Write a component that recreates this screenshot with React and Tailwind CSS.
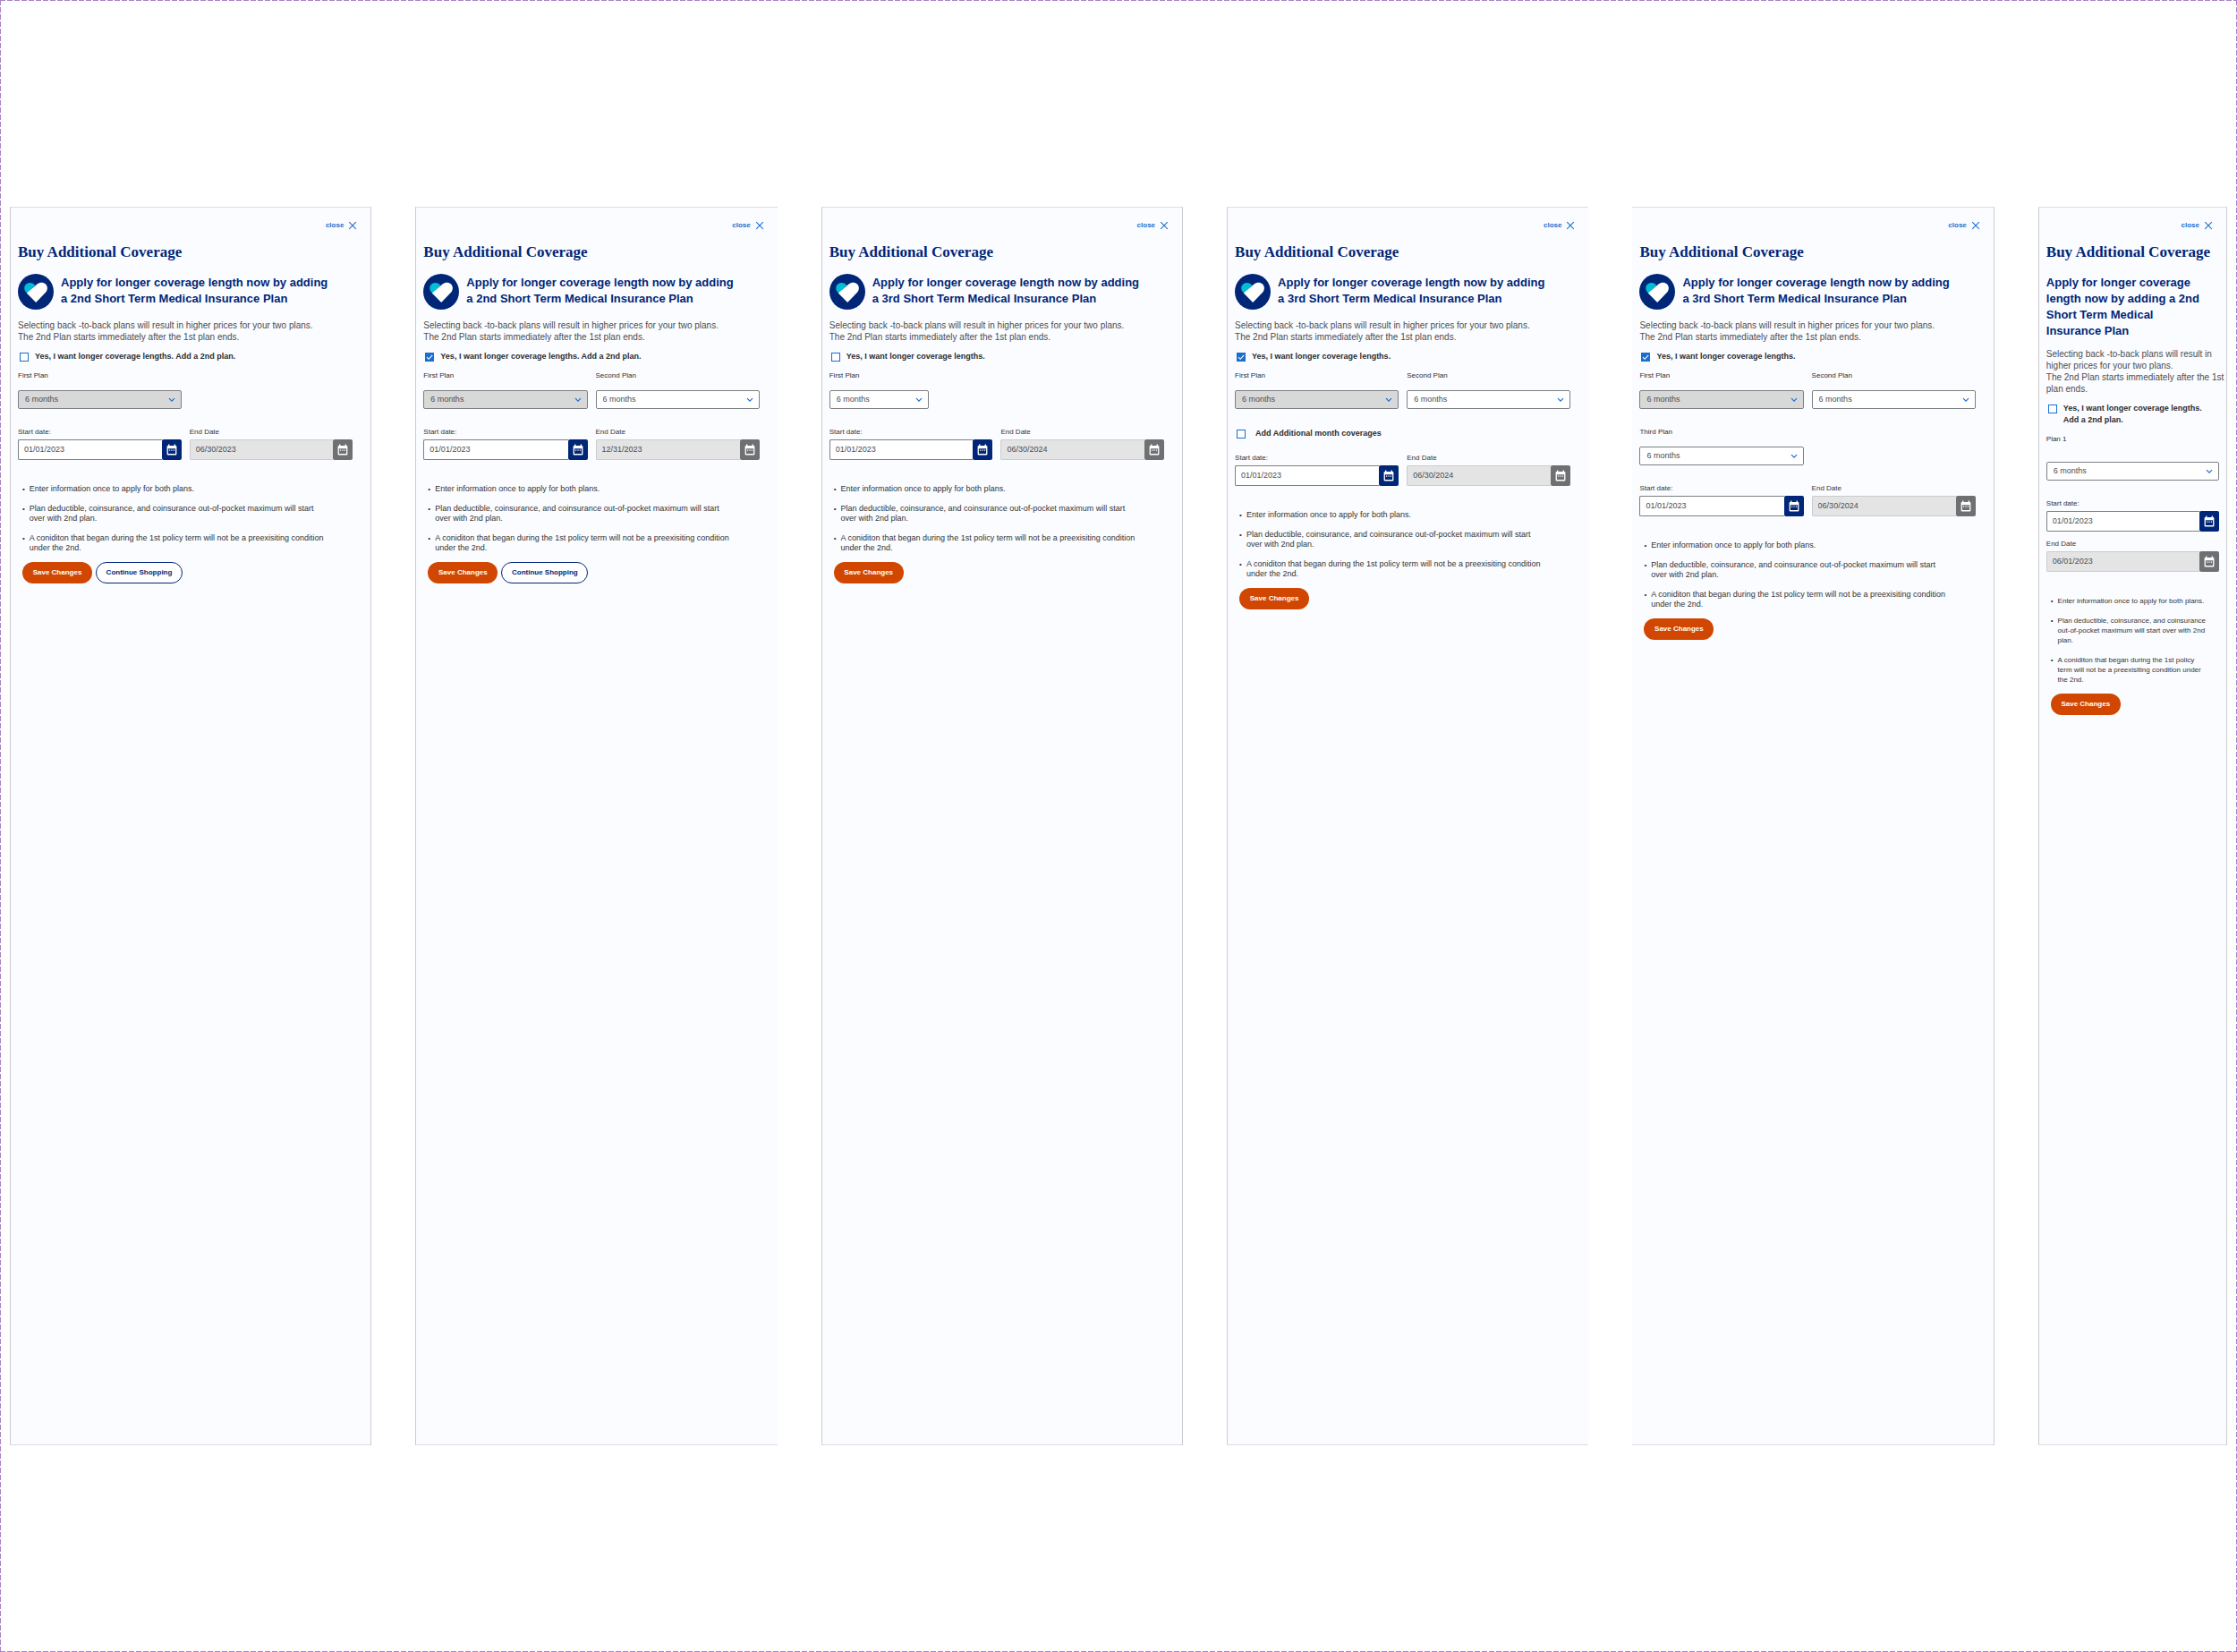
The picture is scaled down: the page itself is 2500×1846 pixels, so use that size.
import { useId } from "react";

function HeartLogo() {
  return (
    <svg viewBox="0 0 40 40" className="size-10 shrink-0" aria-hidden="true">
      <circle cx="20" cy="20" r="20" fill="#002677" />
      <path d="M9.2 20.6C6.4 17.6 6.6 13.4 9.6 11.2C12.8 9 17 9.8 19.4 12.8L10.4 21.8Z" fill="#00bed5" />
      <path
        d="M9.8 21.4L21.6 11.6C24.4 9.4 28.4 9.2 31 11.6C33.6 14.2 33.4 18.2 31 20.8L20.2 32Z"
        fill="#fff"
      />
    </svg>
  );
}

function CalendarIcon() {
  return (
    <svg viewBox="0 0 12 14" className="h-3.5 w-3" aria-hidden="true">
      <path
        fillRule="evenodd"
        fill="#fff"
        d="M2 2V0.6H3.4V2H8.6V0.6H10V2H10.4Q11.4 2 11.4 3V11.4Q11.4 12.4 10.4 12.4H1.6Q0.6 12.4 0.6 11.4V3Q0.6 2 1.6 2ZM1.9 5.2V11.1H10.1V5.2Z"
      />
      <path fill="#fff" d="M3 6.6H4.2V7.8H3ZM5.4 6.6H6.6V7.8H5.4ZM7.8 6.6H9V7.8H7.8Z" />
    </svg>
  );
}

function CheckOption({ label, defaultChecked = false, gap = "gap-[7px]" }) {
  const id = useId();
  return (
    <div className={"flex items-start pl-0.5 " + gap}>
      <span className="relative mt-[2px] block size-[10px] shrink-0">
        <input
          id={id}
          type="checkbox"
          defaultChecked={defaultChecked}
          className="peer block size-[10px] appearance-none border border-[#196ecf] bg-white checked:bg-[#196ecf]"
        />
        <svg
          viewBox="0 0 10 10"
          className="pointer-events-none absolute inset-0 hidden peer-checked:block"
          aria-hidden="true"
        >
          <path d="M2 5.2L4.1 7.3L8.2 2.8" fill="none" stroke="#fff" strokeWidth="1.1" />
        </svg>
      </span>
      <label htmlFor={id} className="text-[9px] leading-[13px] font-bold text-[#2b2c30]">
        {label}
      </label>
    </div>
  );
}

function PlanSelect({ label, disabled = false, narrow = false, tall = false }) {
  const id = useId();
  return (
    <div>
      <label htmlFor={id} className={(tall ? "mb-[19px]" : "mb-[10px]") + " block text-[8px] leading-[13px] text-[#2b2c30]"}>
        {label}
      </label>
      <div className={(narrow ? "w-[111px]" : "w-full") + " relative"}>
        <select
          id={id}
          disabled={disabled}
          className="block h-[21px] w-full appearance-none rounded-[2px] border border-[#7d7f81] bg-white pl-[7px] text-[9px] text-[#4b4d4f] opacity-100 disabled:bg-[#d8d8d8]"
        >
          <option>6 months</option>
        </select>
        <svg viewBox="0 0 8 6" className="pointer-events-none absolute top-2 right-[7px] h-1.5 w-2" aria-hidden="true">
          <path d="M1 1.2L4 4.2L7 1.2" fill="none" stroke="#196ecf" strokeWidth="1.2" />
        </svg>
      </div>
    </div>
  );
}

function DateField({ label, value, disabled = false }) {
  const id = useId();
  return (
    <div>
      <label htmlFor={id} className="block pb-[3px] text-[8px] leading-[11px] text-[#323334]">
        {label}
      </label>
      <div className="flex h-[23px]">
        <input
          id={id}
          type="text"
          defaultValue={value}
          disabled={disabled}
          className="min-w-0 flex-1 rounded-l-[2px] border border-r-0 border-[#7d7f81] bg-white pl-1.5 text-[9px] text-[#4b4d4f] disabled:border-[#cbccce] disabled:bg-[#e4e4e4]"
        />
        <button
          type="button"
          disabled={disabled}
          aria-label={"Choose " + label}
          className="flex w-[22px] items-center justify-center rounded-[2px] bg-[#002677] disabled:bg-[#6e7072]"
        >
          <CalendarIcon />
        </button>
      </div>
    </div>
  );
}

const NOTES = [
  "Enter information once to apply for both plans.",
  "Plan deductible, coinsurance, and coinsurance out-of-pocket maximum will start over with 2nd plan.",
  "A coniditon that began during the 1st policy term will not be a preexisiting condition under the 2nd.",
];

function Panel({ border, ordinal, compact = false, option, checked, plans, extra, endDate, shopping }) {
  return (
    <section className={"flex min-w-0 flex-col border-x-[#cbccce] border-y border-y-[#dcdde0] bg-[#fbfcff] pb-10 " + border}>
      <div className="flex justify-end pt-3.5 pr-[15px]">
        <button type="button" className="flex h-3 items-center gap-[5px] text-[8px] font-bold text-[#196ecf]">
          close
          <svg viewBox="0 0 10 10" className="size-2.5" aria-hidden="true">
            <path d="M1.2 1.2L8.8 8.8M8.8 1.2L1.2 8.8" stroke="#196ecf" strokeWidth="1.1" />
          </svg>
        </button>
      </div>
      <h2 className="mt-3 pl-2 font-['Liberation_Serif',serif] text-[17px] leading-6 font-bold whitespace-nowrap text-[#002677]">
        Buy Additional Coverage
      </h2>
      <div className={compact ? "mt-3 px-2" : "mt-3 flex gap-2 pl-2"}>
        {!compact && <HeartLogo />}
        <h3
          className={
            (compact ? "max-w-[180px]" : "max-w-[306px]") +
            " pt-px text-[13px] leading-[18px] font-bold text-[#002677]"
          }
        >
          {`Apply for longer coverage length now by adding a ${ordinal} Short Term Medical Insurance Plan`}
        </h3>
      </div>
      <p className={(compact ? "mt-2.5" : "mt-[11px]") + " pl-2 text-[10px] leading-[13px] text-[#4b4d4f]"}>
        Selecting back -to-back plans will result in higher prices for your two plans.
        <br />
        The 2nd Plan starts immediately after the 1st plan ends.
      </p>
      <form className={compact ? "px-2" : "pr-5 pl-2"} onSubmit={(e) => e.preventDefault()}>
        <div className="mt-[9px]">
          <CheckOption label={option} defaultChecked={checked} />
        </div>
        <div className={(compact ? "grid-cols-1" : "grid-cols-2") + " mt-2 grid gap-x-[9px] gap-y-[19px]"}>
          {plans.map((p) => (
            <PlanSelect key={p.label} {...p} />
          ))}
        </div>
        {extra && (
          <div className="mt-[21px]">
            <CheckOption label={extra} gap="gap-[11px]" />
          </div>
        )}
        <div
          className={
            (compact ? "grid-cols-1 gap-y-2 " : "grid-cols-2 gap-x-[9px] ") + (extra ? "mt-[15px]" : "mt-5") + " grid"
          }
        >
          <DateField label="Start date:" value="01/01/2023" />
          <DateField label="End Date" value={endDate} disabled />
        </div>
        <ul
          className={
            (compact ? "max-w-[182px] text-[8px]" : "max-w-[346px] text-[9px]") +
            " mt-[27px] space-y-[11px] pl-[5px] leading-[11px] text-[#323334]"
          }
        >
          {NOTES.map((note) => (
            <li key={note} className="flex gap-[5px]">
              <span className="text-[8px]" aria-hidden="true">
                •
              </span>
              <span>{note}</span>
            </li>
          ))}
        </ul>
        <div className="mt-2.5 flex gap-1 pl-[5px]">
          <button type="submit" className="h-6 w-[78px] rounded-full bg-[#d14600] text-[8px] font-bold text-white">
            Save Changes
          </button>
          {shopping && (
            <button
              type="button"
              className="h-6 w-[97px] rounded-full border border-[#002677] bg-white text-[8px] font-bold text-[#002677]"
            >
              Continue Shopping
            </button>
          )}
        </div>
      </form>
    </section>
  );
}

const LONGER = "Yes, I want longer coverage lengths.";
const FIRST_LOCKED = { label: "First Plan", disabled: true };
const SECOND = { label: "Second Plan" };

const PANELS = [
  { border: "border-x", ordinal: "2nd", option: LONGER + " Add a 2nd plan.", plans: [FIRST_LOCKED], endDate: "06/30/2023", shopping: true },
  { border: "border-l", ordinal: "2nd", option: LONGER + " Add a 2nd plan.", checked: true, plans: [FIRST_LOCKED, SECOND], endDate: "12/31/2023", shopping: true },
  { border: "border-x", ordinal: "3rd", option: LONGER, plans: [{ label: "First Plan", narrow: true }], endDate: "06/30/2024" },
  { border: "border-l", ordinal: "3rd", option: LONGER, checked: true, plans: [FIRST_LOCKED, SECOND], extra: "Add Additional month coverages", endDate: "06/30/2024" },
  { border: "border-r", ordinal: "3rd", option: LONGER, checked: true, plans: [FIRST_LOCKED, SECOND, { label: "Third Plan" }], endDate: "06/30/2024" },
  { border: "border-x", ordinal: "2nd", compact: true, option: LONGER + " Add a 2nd plan.", plans: [{ label: "Plan 1", tall: true }], endDate: "06/01/2023" },
];

export default function App() {
  return (
    <main className="grid min-h-screen grid-cols-[repeat(5,404fr)_211fr] gap-x-[49px] px-[11px] py-[231px] font-['Liberation_Sans',Arial,sans-serif] [background:linear-gradient(90deg,#a783c9_6px,transparent_6px)_0_0/8px_1px_repeat-x,linear-gradient(90deg,#a783c9_6px,transparent_6px)_0_100%/8px_1px_repeat-x,linear-gradient(#a783c9_6px,transparent_6px)_0_0/1px_8px_repeat-y,linear-gradient(#a783c9_6px,transparent_6px)_100%_0/1px_8px_repeat-y,#fff]">
      {PANELS.map((panel, i) => (
        <Panel key={i} {...panel} />
      ))}
    </main>
  );
}
